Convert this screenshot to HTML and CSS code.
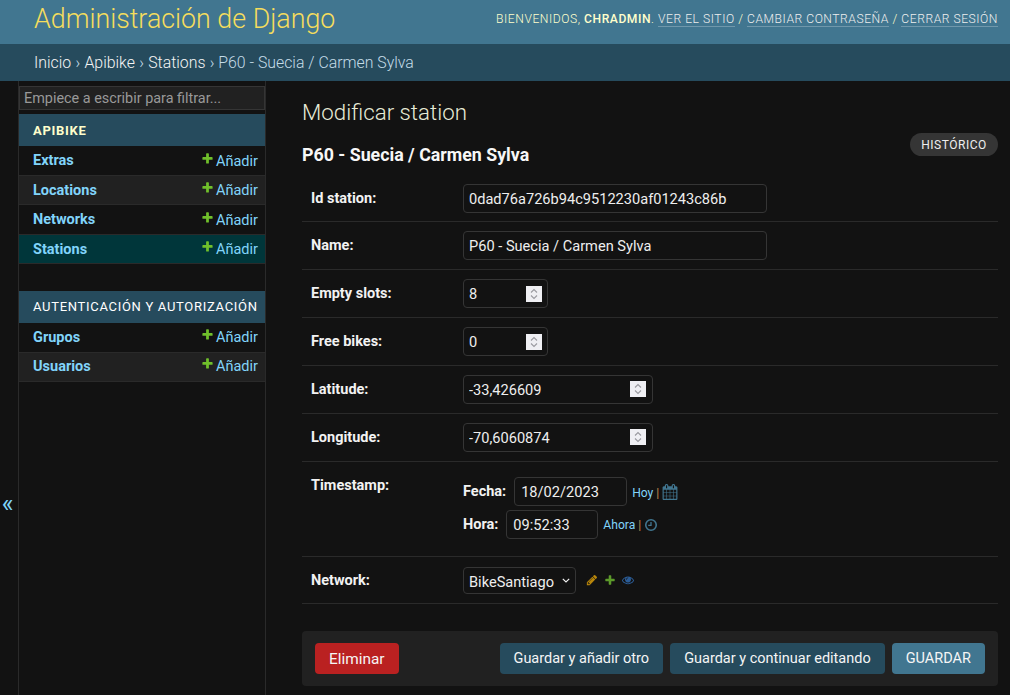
FILE: index.html
```html
<!DOCTYPE html>
<html lang="es">
<head>
    <meta charset="UTF-8">
    <title>Modificar station | Administración de Django</title>
    <link rel="stylesheet" href="styles.css">
</head>
<body>
    <svg class="icon-defs" width="0" height="0">
        <symbol id="i-add" viewBox="0 0 1792 1792"><path d="M1600 796v192q0 40-28 68t-68 28h-416v416q0 40-28 68t-68 28h-192q-40 0-68-28t-28-68v-416h-416q-40 0-68-28t-28-68v-192q0-40 28-68t68-28h416v-416q0-40 28-68t68-28h192q40 0 68 28t28 68v416h416q40 0 68 28t28 68z"/></symbol>
        <symbol id="i-spin" viewBox="0 0 16 16"><path d="M5 6.500 8 3.500l3 3M5 9.500l3 3 3-3" fill="none" stroke="#9a9aa0" stroke-width="1.100"/></symbol>
    </svg>

    <header class="top-bar">
        <h1 class="brand">Administración de Django</h1>
        <div class="user-tools">
            Bienvenidos, <strong>chradmin</strong>.
            <a href="#">Ver el sitio</a> /
            <a href="#">Cambiar contraseña</a> /
            <a href="#">Cerrar sesión</a>
        </div>
    </header>
    <nav class="breadcrumbs">
        <a href="#">Inicio</a> › <a href="#">Apibike</a> › <a href="#">Stations</a> › P60 - Suecia / Carmen Sylva
    </nav>

    <div class="main">
        <button class="nav-toggle" type="button">«</button>
        <aside class="sidebar">
            <input class="nav-filter" type="text" placeholder="Empiece a escribir para filtrar...">

            <div class="module">
                <div class="module-title bold">Apibike</div>
                <div class="model-row"><a href="#">Extras</a><span class="add-link"><svg class="add-icon"><use href="#i-add"/></svg>Añadir</span></div>
                <div class="model-row alt"><a href="#">Locations</a><span class="add-link"><svg class="add-icon"><use href="#i-add"/></svg>Añadir</span></div>
                <div class="model-row"><a href="#">Networks</a><span class="add-link"><svg class="add-icon"><use href="#i-add"/></svg>Añadir</span></div>
                <div class="model-row current"><a href="#">Stations</a><span class="add-link"><svg class="add-icon"><use href="#i-add"/></svg>Añadir</span></div>
            </div>

            <div class="module">
                <div class="module-title">Autenticación y Autorización</div>
                <div class="model-row"><a href="#">Grupos</a><span class="add-link"><svg class="add-icon"><use href="#i-add"/></svg>Añadir</span></div>
                <div class="model-row alt"><a href="#">Usuarios</a><span class="add-link"><svg class="add-icon"><use href="#i-add"/></svg>Añadir</span></div>
            </div>
        </aside>

        <main class="content">
            <h1 class="page-title">Modificar station</h1>
            <div class="object-head">
                <h2 class="object-title">P60 - Suecia / Carmen Sylva</h2>
                <a class="history" href="#">Histórico</a>
            </div>

            <form>
                <div class="form-row">
                    <label>Id station:</label>
                    <span class="field w-304"><input type="text" value="0dad76a726b94c9512230af01243c86b"></span>
                </div>
                <div class="form-row">
                    <label>Name:</label>
                    <span class="field w-304"><input type="text" value="P60 - Suecia / Carmen Sylva"></span>
                </div>
                <div class="form-row">
                    <label>Empty slots:</label>
                    <span class="field w-85"><input type="text" value="8"><svg class="spin"><use href="#i-spin"/></svg></span>
                </div>
                <div class="form-row">
                    <label>Free bikes:</label>
                    <span class="field w-85"><input type="text" value="0"><svg class="spin"><use href="#i-spin"/></svg></span>
                </div>
                <div class="form-row">
                    <label>Latitude:</label>
                    <span class="field w-190"><input type="text" value="-33,426609"><svg class="spin"><use href="#i-spin"/></svg></span>
                </div>
                <div class="form-row">
                    <label>Longitude:</label>
                    <span class="field w-190"><input type="text" value="-70,6060874"><svg class="spin"><use href="#i-spin"/></svg></span>
                </div>
                <div class="form-row datetime-row">
                    <label>Timestamp:</label>
                    <div class="datetime">
                        <div class="dt-line">
                            <b>Fecha:</b>
                            <span class="field w-113 dt-field"><input type="text" value="18/02/2023"></span>
                            <span class="shortcuts"><a href="#">Hoy</a> <i>|</i>
                                <svg class="dt-icon" viewBox="0 0 1792 1792"><path d="M192 1664h288v-288h-288v288zm352 0h320v-288h-320v288zm-352-352h288v-320h-288v320zm352 0h320v-320h-320v320zm-352-384h288v-288h-288v288zm736 736h320v-288h-320v288zm-384-736h320v-288h-320v288zm768 736h288v-288h-288v288zm-384-352h320v-320h-320v320zm-352-864v-288q0-13-9.500-22.500t-22.500-9.500h-64q-13 0-22.500 9.500t-9.500 22.500v288q0 13 9.500 22.500t22.500 9.500h64q13 0 22.500-9.500t9.500-22.500zm736 864h288v-320h-288v320zm-384-384h320v-288h-320v288zm384 0h288v-288h-288v288zm32-480v-288q0-13-9.500-22.500t-22.500-9.500h-64q-13 0-22.500 9.500t-9.500 22.500v288q0 13 9.500 22.500t22.500 9.500h64q13 0 22.500-9.500t9.500-22.500zm384-64v1280q0 52-38 90t-90 38h-1408q-52 0-90-38t-38-90v-1280q0-52 38-90t90-38h128v-96q0-66 47-113t113-47h64q66 0 113 47t47 113v96h384v-96q0-66 47-113t113-47h64q66 0 113 47t47 113v96h128q52 0 90 38t38 90z"/></svg>
                            </span>
                        </div>
                        <div class="dt-line">
                            <b>Hora:</b>
                            <span class="field w-92 dt-field"><input type="text" value="09:52:33"></span>
                            <span class="shortcuts"><a href="#">Ahora</a> <i>|</i>
                                <svg class="dt-icon clock" viewBox="0 0 16 16"><circle cx="8" cy="8" r="6" fill="none" stroke="currentColor" stroke-width="1.800"/><path d="M8 4.500V8.500H4.800" fill="none" stroke="currentColor" stroke-width="1.500"/></svg>
                            </span>
                        </div>
                    </div>
                </div>
                <div class="form-row network-row">
                    <label>Network:</label>
                    <select class="network-select"><option>BikeSantiago</option></select>
                    <span class="related">
                        <svg class="rel-icon pencil" viewBox="0 0 1792 1792"><path d="M491 1536l91-91-235-235-91 91v107h128v128h107zm523-928q0-22-22-22-10 0-17 7l-542 542q-7 7-7 17 0 22 22 22 10 0 17-7l542-542q7-7 7-17zm-54-192l416 416-832 832h-416v-416zm683 96q0 53-37 90l-166 166-416-416 166-165q36-38 90-38 53 0 91 38l235 234q37 39 37 91z"/></svg>
                        <svg class="rel-icon plus"><use href="#i-add"/></svg>
                        <svg class="rel-icon eye" viewBox="0 0 1792 1792"><path d="M1664 960q-152-236-381-353 61 104 61 225 0 185-131.500 316.500t-316.500 131.500-316.500-131.500-131.500-316.500q0-121 61-225-229 117-381 353 133 205 333.500 326.500t434.500 121.500 434.500-121.500 333.500-326.500zm-720-384q0-20-14-34t-34-14q-125 0-214.500 89.500t-89.500 214.500q0 20 14 34t34 14 34-14 14-34q0-86 61-147t147-61q20 0 34-14t14-34zm848 384q0 34-20 69-140 230-376.500 368.500t-499.500 138.500-499.500-139-376.500-368q-20-35-20-69t20-69q140-229 376.500-368t499.500-139 499.500 139 376.500 368q20 35 20 69z"/></svg>
                    </span>
                </div>

                <div class="submit-row">
                    <a class="btn btn-delete" href="#">Eliminar</a>
                    <a class="btn btn-dark push" href="#">Guardar y añadir otro</a>
                    <a class="btn btn-dark" href="#">Guardar y continuar editando</a>
                    <a class="btn btn-save" href="#">GUARDAR</a>
                </div>
            </form>
        </main>
    </div>
</body>
</html>
```

FILE: styles.css
```css
* {
    box-sizing: border-box;
}
html, body {
    height: 100%;
}
body {
    margin: 0;
    overflow: hidden;
    display: flex;
    flex-direction: column;
    font-family: Roboto, "Liberation Sans", sans-serif;
    font-size: 14.5px;
    color: #eeeeee;
    background-color: #121212;
}
a {
    text-decoration: none;
}
.icon-defs {
    position: absolute;
}

/* header */
.top-bar {
    flex: none;
    height: 44px;
    padding: 0 12px 0 34px;
    display: flex;
    align-items: center;
    justify-content: space-between;
    background-color: #417690;
}
.brand {
    margin: 0 0 7px;
    font-size: 26.800px;
    font-weight: 300;
    color: #f5dd5d;
}
.user-tools {
    margin-bottom: 7px;
    font-size: 12.100px;
    font-weight: 300;
    letter-spacing: 0.55px;
    text-transform: uppercase;
    color: #ffffcc;
}
.user-tools strong {
    font-weight: 500;
}
.user-tools a {
    color: #eeeeee;
    border-bottom: 1px solid rgba(255, 255, 255, 0.25);
}
.breadcrumbs {
    flex: none;
    height: 37px;
    padding: 0 34px;
    display: flex;
    align-items: center;
    gap: 4.3px;
    font-size: 15.850px;
    font-weight: 300;
    color: #c4dce8;
    background-color: #264b5d;
}
.breadcrumbs a {
    color: #f5f5f5;
}

/* layout */
.main {
    flex: 1;
    min-height: 0;
    display: flex;
}
.nav-toggle {
    flex: none;
    width: 19px;
    padding: 230px 3px 0 0;
    border: 0;
    border-right: 1px solid #2a2a2a;
    background-color: #121212;
    color: #81d4fa;
    font-family: Roboto, sans-serif;
    font-size: 25px;
    line-height: 1;
}
.sidebar {
    flex: none;
    width: 247px;
    padding-top: 5px;
    border-right: 1px solid #2a2a2a;
}
.nav-filter {
    display: block;
    width: 100%;
    height: 24px;
    margin-bottom: 4.25px;
    padding: 0 4px;
    border: 1px solid #353535;
    background-color: #212121;
    color: #eeeeee;
    font-family: inherit;
    font-size: 14.400px;
}
.nav-filter::placeholder {
    color: #999999;
    opacity: 1;
}
.module {
    margin-bottom: 26.75px;
}
.module-title {
    height: 32px;
    padding: 0 0 1px 14px;
    display: flex;
    align-items: center;
    font-size: 13px;
    letter-spacing: 0.7px;
    text-transform: uppercase;
    white-space: nowrap;
    color: #ffffff;
    background-color: #264b5d;
}
.module-title.bold {
    padding-bottom: 0;
    font-weight: 700;
    color: #ffffcc;
}
.model-row {
    height: 29.500px;
    padding: 0 7px 0 14px;
    display: flex;
    align-items: center;
    justify-content: space-between;
    border-bottom: 1px solid #2a2a2a;
}
.model-row a {
    font-weight: 700;
    color: #81d4fa;
}
.model-row.alt {
    background-color: #212121;
}
.module + .module .alt {
    padding-bottom: 1px;
}
.model-row.current {
    background-color: #00363a;
}
.add-link {
    color: #81d4fa;
}
.add-icon {
    width: 13px;
    height: 13px;
    margin-right: 2px;
    fill: #70bf2b;
    vertical-align: 1px;
}

/* content */
.content {
    flex: 1;
    min-width: 0;
    padding: 18px 12px 0 36px;
}
.page-title {
    margin: 0;
    font-size: 22.300px;
    font-weight: 300;
    color: #e8ecd8;
}
.object-head {
    display: flex;
    justify-content: space-between;
    align-items: flex-start;
    height: 49px;
}
.object-title {
    margin: 19px 0 0;
    font-size: 17.800px;
    font-weight: 700;
    color: #f7f7f7;
}
.history {
    margin-top: 8px;
    height: 23px;
    width: 88px;
    display: flex;
    align-items: center;
    justify-content: center;
    border-radius: 15px;
    font-size: 12px;
    letter-spacing: 0.5px;
    text-transform: uppercase;
    color: #eeeeee;
    background-color: #353535;
}
.form-row {
    height: 48px;
    padding: 0 0 0 9px;
    display: flex;
    align-items: center;
    border-bottom: 1px solid #2a2a2a;
}
.form-row:first-child {
    padding-top: 2px;
}
.form-row label {
    flex: none;
    width: 152px;
    font-weight: 700;
    color: #f2f2f2;
}
.field {
    position: relative;
    display: block;
    height: 29px;
    border: 1px solid #353535;
    border-radius: 4px;
}
.field input {
    width: 100%;
    height: 100%;
    padding: 0 5px;
    border: 0;
    background: transparent;
    color: #eeeeee;
    font-family: inherit;
    font-size: 14.600px;
    outline: none;
}
.w-304 { width: 304px; }
.w-190 { width: 190px; }
.w-85 { width: 85px; }
.w-113 { width: 113px; }
.w-92 { width: 92px; }
.spin {
    position: absolute;
    top: 6px;
    right: 5px;
    width: 16px;
    height: 16px;
    background-color: #efeff3;
}
.w-190 .spin {
    top: 5px;
    right: 6px;
}
.datetime-row {
    height: 95px;
    align-items: flex-start;
    padding-top: 15px;
}
.datetime {
    display: flex;
    flex-direction: column;
    gap: 4px;
}
.dt-line {
    display: flex;
    align-items: center;
    height: 29px;
}
.dt-line b {
    margin-right: 8px;
    color: #f2f2f2;
}
.dt-field input {
    padding: 0 6px;
}
.shortcuts {
    margin-left: 5px;
    font-size: 12.100px;
    color: #81d4fa;
}
.shortcuts a {
    color: #81d4fa;
}
.shortcuts i {
    font-style: normal;
    color: #c08a50;
}
.dt-icon {
    width: 16px;
    height: 16px;
    fill: #417690;
    color: #417690;
    vertical-align: -3px;
}
.dt-icon.clock {
    width: 14px;
    height: 14px;
}
.network-row {
    height: 47px;
}
.network-select {
    appearance: none;
    width: 113px;
    height: 27px;
    padding: 3px 0 0 5px;
    border: 1px solid #353535;
    border-radius: 4px;
    background: #121212 url("data:image/svg+xml,%3Csvg xmlns='http://www.w3.org/2000/svg' width='8' height='5'%3E%3Cpath d='M.8.8 4 4 7.200.8' fill='none' stroke='%23eee' stroke-width='1.200'/%3E%3C/svg%3E") no-repeat right 5px center;
    color: #eeeeee;
    font-family: inherit;
    font-size: 14.600px;
}
.related {
    margin-left: 10px;
    display: flex;
    align-items: center;
    gap: 6px;
}
.rel-icon {
    width: 12px;
    height: 12px;
}
.rel-icon.pencil { fill: #b8860b; }
.rel-icon.plus { fill: #5c9a2a; }
.rel-icon.eye { fill: #2b5c96; }
.submit-row {
    margin-top: 27px;
    height: 55px;
    padding: 0 13px;
    display: flex;
    align-items: center;
    gap: 7px;
    border-radius: 4px;
    background-color: #212121;
}
.btn {
    height: 31px;
    padding: 0 14px;
    display: flex;
    align-items: center;
    border-radius: 4px;
    font-size: 14.500px;
    color: #f5f5f5;
}
.btn-delete {
    font-size: 15.400px;
    background-color: #ba2121;
}
.btn-dark {
    background-color: #264b5d;
}
.btn-save {
    background-color: #417690;
}
.push {
    margin-left: auto;
}
```
